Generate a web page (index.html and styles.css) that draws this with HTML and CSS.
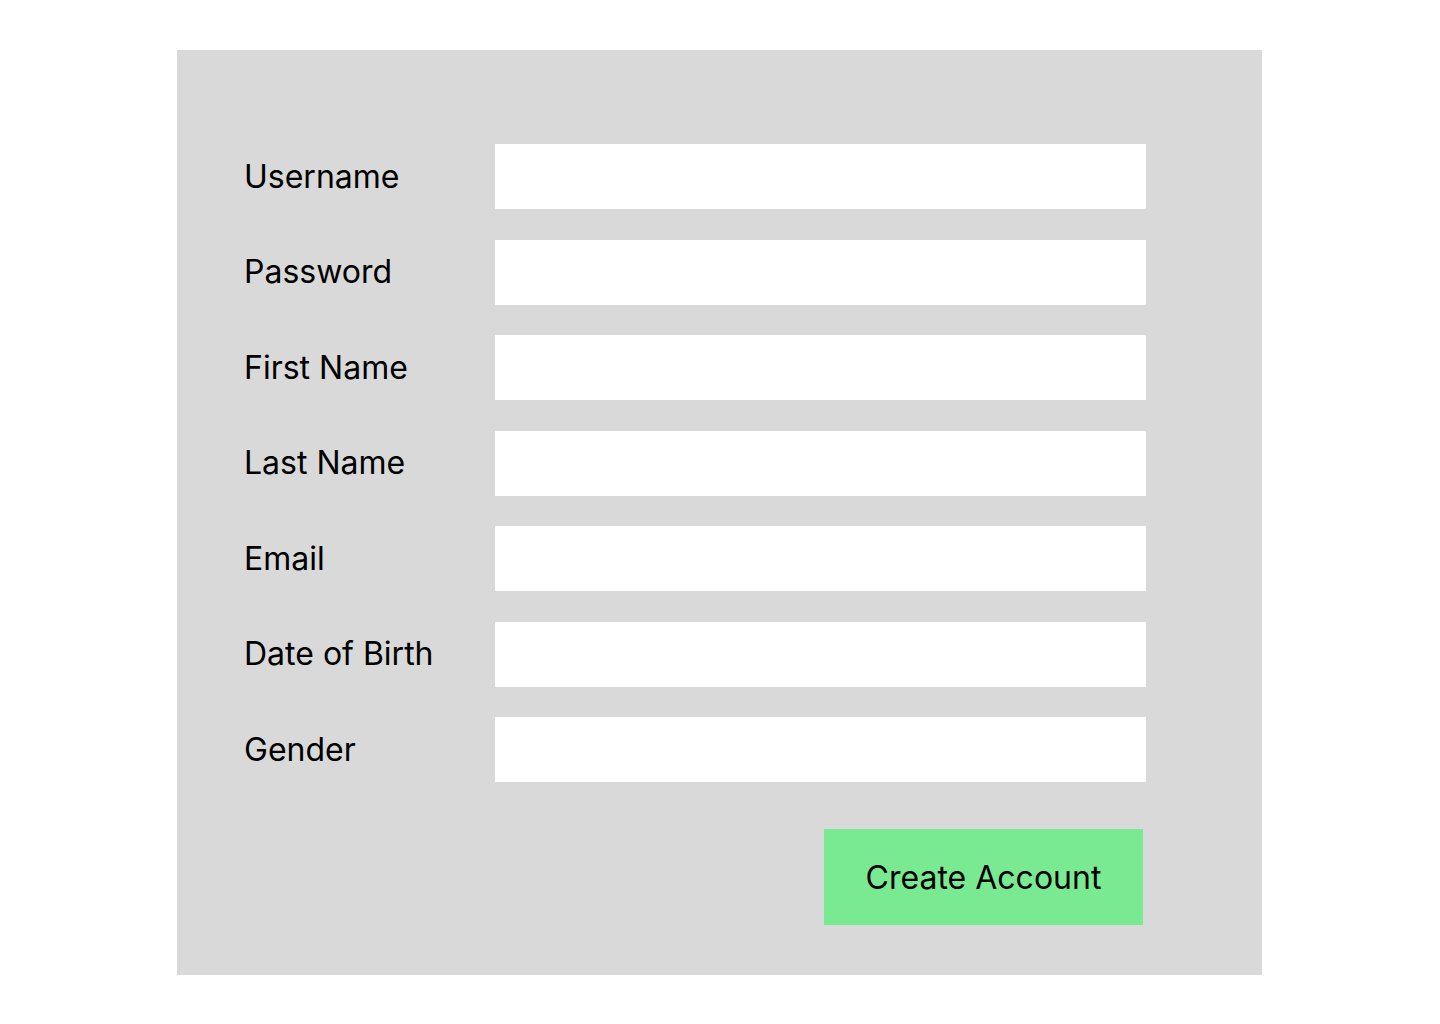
FILE: index.html
```html
<!DOCTYPE html>
<html lang="en">
<head>
<meta charset="utf-8">
<title>Create Account</title>
<link rel="stylesheet" href="styles.css">
</head>
<body>
<form class="panel">
  <div class="fields">
    <label class="label" for="username">Username</label>
    <input class="field" id="username" type="text">
    <label class="label" for="password">Password</label>
    <input class="field" id="password" type="password">
    <label class="label" for="first">First Name</label>
    <input class="field" id="first" type="text">
    <label class="label" for="last">Last Name</label>
    <input class="field" id="last" type="text">
    <label class="label" for="email">Email</label>
    <input class="field" id="email" type="email">
    <label class="label" for="dob">Date of Birth</label>
    <input class="field" id="dob" type="text">
    <label class="label" for="gender">Gender</label>
    <input class="field" id="gender" type="text">
  </div>
  <div class="actions">
    <button class="submit" type="button">Create Account</button>
  </div>
</form>
</body>
</html>
```
FILE: styles.css
```css
html, body {
  margin: 0;
  padding: 0;
  background: #ffffff;
}

body {
  font-family: Inter, "Noto Sans", sans-serif;
  color: #000000;
  padding: 50px 0 0 177px;
}

.panel {
  box-sizing: border-box;
  width: 1085px;
  height: 925px;
  background: #d9d9d9;
  padding: 94px 116px 50px 67px;
  display: flex;
  flex-direction: column;
}

.fields {
  display: grid;
  grid-template-columns: 251px 1fr;
  grid-auto-rows: 65px;
  row-gap: 30.5px;
  align-items: center;
}

.label {
  font-size: 32px;
  line-height: 40px;
  padding-top: 0;
}

.field {
  box-sizing: border-box;
  height: 65px;
  width: 100%;
  border: none;
  background: #ffffff;
  margin: 0;
  padding: 0 16px;
  font-family: inherit;
  font-size: 24px;
  outline: none;
}

.actions {
  display: flex;
  justify-content: flex-end;
  margin-top: 47px;
  padding-right: 3px;
}

.submit {
  width: 319px;
  height: 96px;
  border: none;
  background: #79ea92;
  color: #000000;
  font-family: inherit;
  font-size: 32px;
  padding: 0;
  cursor: pointer;
}
```
